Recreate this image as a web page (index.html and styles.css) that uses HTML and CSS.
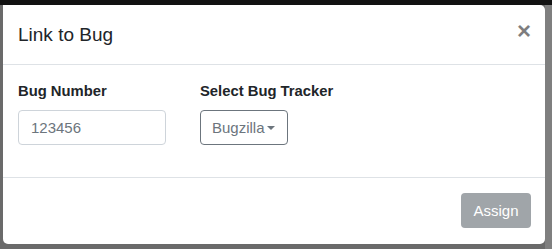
FILE: index.html
```html
<!DOCTYPE html>
<html><head>
<meta charset="UTF-8">
<title>Link to Bug</title>
<link rel="stylesheet" href="styles.css">
</head>
<body>
  <div class="topbar"></div>
  <div class="page">
    <div class="modal">
      <div class="modal-header">
        <h5 class="modal-title">Link to Bug</h5>
        <button class="close" type="button">&times;</button>
      </div>
      <div class="modal-body">
        <div class="form-row">
          <div class="form-group">
            <label for="bugNumber">Bug Number</label>
            <input type="text" id="bugNumber" class="form-control" placeholder="123456">
          </div>
          <div class="form-group">
            <label>Select Bug Tracker</label>
            <button class="btn-tracker" type="button">Bugzilla<span class="caret"></span></button>
          </div>
        </div>
      </div>
      <div class="modal-footer">
        <button class="btn-assign" type="button" disabled>Assign</button>
      </div>
    </div>
  </div>
</body>
</html>
```

FILE: styles.css
```css
body, html {
  margin: 0;
  padding: 0;
  height: 100%;
  font-family: "Liberation Sans", Arial, sans-serif;
  font-size: 15px;
  color: #212529;
  background-color: #6a6a6a;
}
.topbar {
  height: 5px;
  background-color: #121212;
}
.page {
  padding: 0 7px 0 3px;
  background: linear-gradient(to right, #6a6a6a 3px, #6a6a6a calc(100% - 7px), #7f7f7f calc(100% - 7px));
  height: calc(100% - 5px);
  box-sizing: border-box;
}
.modal {
  background-color: #fff;
  border-radius: 5px;
  border-top-left-radius: 0;
}
.modal-header {
  display: flex;
  align-items: center;
  justify-content: space-between;
  padding: 15px;
  border-bottom: 1px solid #dee2e6;
}
.modal-title {
  margin: 0;
  font-size: 19px;
  font-weight: normal;
  line-height: 29px;
}
.close {
  align-self: flex-start;
  background: none;
  border: none;
  padding: 0;
  margin: -1px -1px 0 0;
  font-family: "Liberation Sans", Arial, sans-serif;
  font-size: 24px;
  font-weight: bold;
  line-height: 24px;
  color: #000;
  opacity: 0.5;
}
.modal-body {
  padding: 15px;
}
.form-row {
  display: flex;
  gap: 34px;
}
.form-group {
  margin-bottom: 17px;
}
label {
  display: block;
  font-weight: bold;
  font-size: 14.8px;
  line-height: 22px;
  margin-bottom: 8px;
}
.form-control {
  display: block;
  box-sizing: border-box;
  width: 148px;
  height: 35px;
  padding: 6px 12px;
  border: 1px solid #ced4da;
  border-radius: 4px;
  font-family: inherit;
  font-size: 15px;
  color: #495057;
}
.form-control::placeholder {
  color: #6c757d;
}
.btn-tracker {
  box-sizing: border-box;
  height: 35px;
  width: 88px;
  padding: 6px 11px;
  border: 1px solid #6c757d;
  border-radius: 4px;
  background: #fff;
  color: #6c757d;
  font-family: inherit;
  font-size: 15px;
  text-align: left;
}
.caret {
  display: inline-block;
  margin-left: 2px;
  vertical-align: 3px;
  border-top: 4px solid #6c757d;
  border-left: 4px solid transparent;
  border-right: 4px solid transparent;
}
.modal-footer {
  display: flex;
  justify-content: flex-end;
  padding: 15px 14px 16px 15px;
  border-top: 1px solid #dee2e6;
}
.btn-assign {
  height: 35px;
  width: 70px;
  border: none;
  border-radius: 4px;
  background-color: #a0a5a9;
  color: #fff;
  font-family: inherit;
  font-size: 15px;
}
```
